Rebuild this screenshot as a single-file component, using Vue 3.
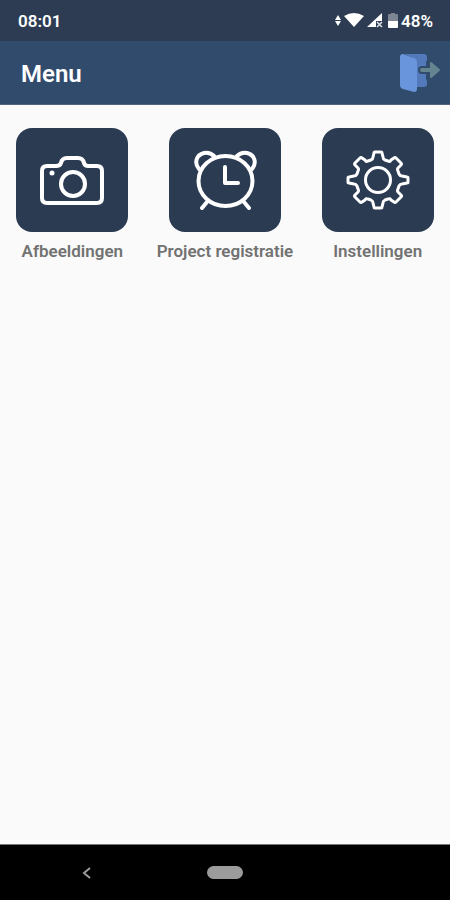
<script setup>
const items = [
  { id: 'camera', label: 'Afbeeldingen' },
  { id: 'clock', label: 'Project registratie' },
  { id: 'gear', label: 'Instellingen' }
];
</script>

<template>
  <div class="screen">
    <div class="status-bar">
      <span>08:01</span>
      <div class="status-icons">
        <svg width="6" height="14" viewBox="0 0 6 14" fill="#fff">
          <path d="M3 1L6 6H0ZM0 7H6L3 12Z" />
        </svg>
        <svg class="wifi" width="20" height="16" viewBox="0 0 20 16" fill="#fff">
          <path d="M0 3Q10-3 20 3L10 14Z" />
        </svg>
        <svg class="signal" width="16" height="16" viewBox="0 0 16 16">
          <path d="M15 0V8H9V14H0Z" fill="#fff" />
          <path d="M10 9L15 14M15 9L10 14" stroke="#dfe3e9" stroke-width="1.5" />
        </svg>
        <svg class="battery" width="10" height="16" viewBox="0 0 10 16">
          <path d="M3 0H7V1H9Q10 1 10 2V8H0V2Q0 1 1 1H3Z" fill="#7d8593" />
          <path d="M0 8H10V14Q10 15 9 15H1Q0 15 0 14Z" fill="#fff" />
        </svg>
        <span>48%</span>
      </div>
    </div>

    <header class="header">
      <h1>Menu</h1>
      <button class="logout" aria-label="Uitloggen">
        <svg width="42" height="40" viewBox="0 0 42 40">
          <path d="M5 1H25Q28 1 28 4V31Q28 34 25 34H15V5Z" fill="#5279b9" />
          <path d="M23 17H33M31 10L41 17L31 25Z" fill="#314b6d" stroke="#314b6d" stroke-width="8" stroke-linejoin="round" stroke-linecap="round" />
          <path d="M4 1Q1 1 1 4V32Q1 35 4 36L15 39Q18 39 18 36V9Q18 6 15 5Z" fill="#6995dc" />
          <path d="M23 17H33" stroke="#648590" stroke-width="4" stroke-linecap="round" />
          <path d="M32 10L40 17L32 24Z" fill="#648590" stroke="#648590" stroke-width="2" stroke-linejoin="round" />
        </svg>
      </button>
    </header>

    <main class="menu">
      <button v-for="item in items" :key="item.id" class="menu-item">
        <span class="tile">
          <svg class="icon" width="64" height="60" viewBox="0 0 64 60">
            <g v-if="item.id === 'camera'" stroke-width="4">
              <path d="M7 16H16Q20 16 21 13Q22 8 27 8H38Q43 8 44 13Q45 16 48 16H57Q62 16 62 21V48Q62 53 57 53H7Q2 53 2 48V21Q2 16 7 16Z" />
              <circle cx="33" cy="34" r="12" />
              <circle cx="12" cy="23" r="2.5" fill="#fff" stroke="none" />
            </g>
            <g v-else-if="item.id === 'clock'" stroke-width="4">
              <ellipse cx="32.5" cy="31" rx="27" ry="25" />
              <path d="M6 19C1 13 3 5 11 3Q17 2 21 6M59 19C64 13 62 5 54 3Q48 2 44 6" />
              <path d="M14 52L9 58M51 52L56 58M32 17V33H45" />
            </g>
            <g v-else stroke-width="3">
              <path d="M29 2H35Q36 2 36 3L37 7Q37 9 39 10L42 11Q44 12 45 10L48 8Q49 7 50 8L55 13Q56 14 55 15L52 18Q51 19 52 21L53 24Q54 26 56 26L61 27Q62 27 62 28V32Q62 33 61 33L56 34Q54 34 53 36L52 39Q51 41 52 42L55 45Q56 46 55 47L50 52Q49 53 48 52L45 50Q44 48 42 49L39 50Q37 51 37 53L36 57Q36 58 35 58H29Q28 58 28 57L27 53Q27 51 25 50L22 49Q20 48 19 50L16 52Q15 53 14 52L9 47Q8 46 9 45L12 42Q13 41 12 39L11 36Q10 34 8 34L3 33Q2 33 2 32V28Q2 27 3 27L8 26Q10 26 11 24L12 21Q13 19 12 18L9 15Q8 14 9 13L14 8Q15 7 16 8L19 10Q20 12 22 11L25 10Q27 9 27 7L28 3Q28 2 29 2Z" />
              <circle cx="32" cy="30" r="12.5" />
            </g>
          </svg>
        </span>
        <span class="label">{{ item.label }}</span>
      </button>
    </main>

    <nav class="nav-bar">
      <button class="nav-back" aria-label="Terug">
        <svg width="10" height="14" viewBox="0 0 10 14">
          <path d="M8 2L2 7L8 12" fill="none" stroke="#9b9b9b" stroke-width="2" />
        </svg>
      </button>
      <button class="nav-home" aria-label="Startscherm"></button>
      <span></span>
    </nav>
  </div>
</template>

<style>
body {
  margin: 0;
}
</style>

<style scoped>
.screen {
  min-height: 100vh;
  display: flex;
  flex-direction: column;
  background: #fafafa;
  font-family: Roboto, sans-serif;
}
button {
  padding: 0;
  border: none;
  background: transparent;
  font: inherit;
  cursor: pointer;
}
svg {
  display: block;
}
.status-bar {
  box-sizing: border-box;
  height: 41px;
  padding: 0 17px 0 18px;
  display: flex;
  align-items: center;
  justify-content: space-between;
  background: #2d3c52;
  color: #fff;
  font-size: 17px;
  font-weight: 600;
}
.status-icons {
  display: flex;
  align-items: center;
}
.wifi,
.signal {
  margin-left: 3px;
}
.battery {
  margin: 0 3px 0 5px;
}
.header {
  box-sizing: border-box;
  height: 64px;
  padding: 0 9px 0 21px;
  display: flex;
  align-items: center;
  justify-content: space-between;
  background: #314b6d;
  border-bottom: 1px solid #53657e;
}
.header h1 {
  margin: 0;
  padding-top: 2px;
  color: #fff;
  font-size: 24px;
  font-weight: 600;
}
.menu {
  flex: 1;
  padding-top: 23px;
  display: grid;
  grid-template-columns: repeat(3, 1fr);
  column-gap: 8px;
  align-content: start;
}
.menu-item {
  display: flex;
  flex-direction: column;
  align-items: center;
}
.tile {
  width: 112px;
  height: 104px;
  display: flex;
  align-items: center;
  justify-content: center;
  background: #2b3b52;
  border-radius: 16px;
}
.icon {
  fill: none;
  stroke: #fff;
  stroke-linecap: round;
  stroke-linejoin: round;
}
.label {
  margin-top: 9px;
  color: #727272;
  font-size: 17px;
  font-weight: 600;
  line-height: 20px;
  white-space: nowrap;
}
.nav-bar {
  box-sizing: border-box;
  height: 56px;
  display: grid;
  grid-template-columns: 1fr 36px 1fr;
  align-items: center;
  justify-items: center;
  background: #000;
  border-top: 1px solid #777;
}
.nav-back {
  margin-right: 34px;
}
.nav-home {
  width: 36px;
  height: 13px;
  border-radius: 7px;
  background: #9b9b9b;
}
</style>
